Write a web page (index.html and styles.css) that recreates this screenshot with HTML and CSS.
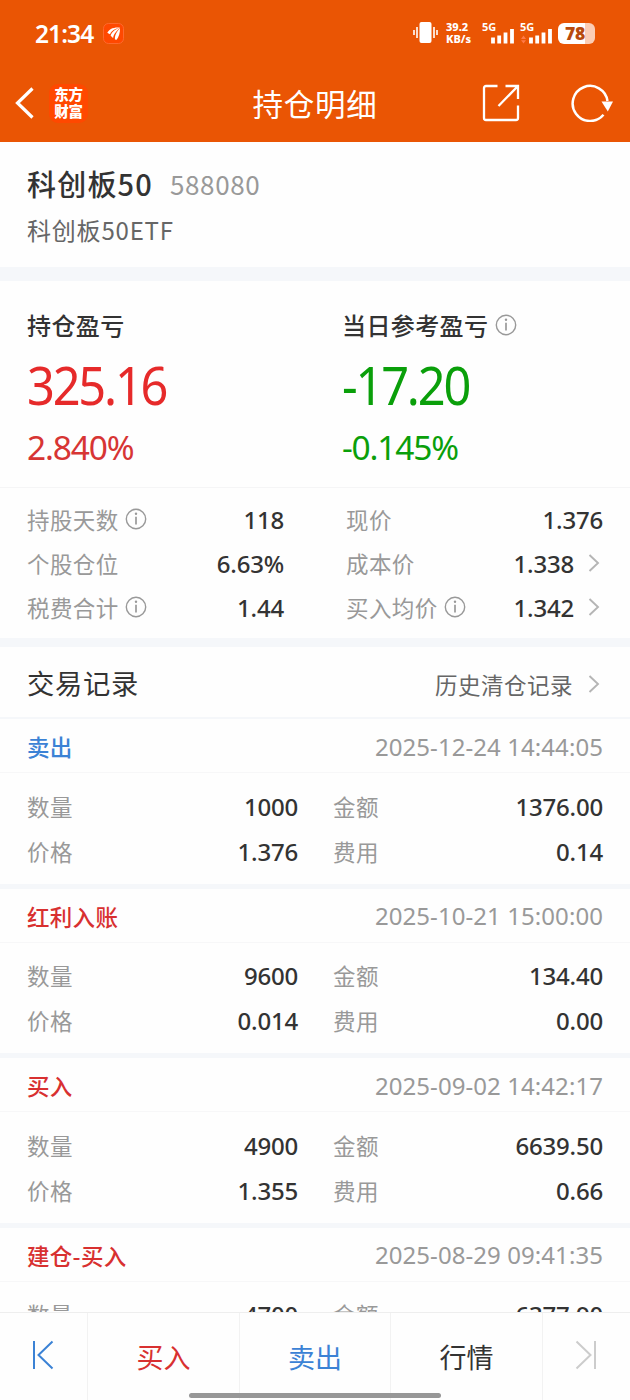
FILE: index.html
```html
<!DOCTYPE html>
<html lang="zh-CN">
<head>
<meta charset="utf-8">
<title>持仓明细</title>
<link rel="stylesheet" href="styles.css">
</head>
<body>
<svg class="defs" width="0" height="0" aria-hidden="true">
  <symbol id="info" viewBox="0 0 22 22"><circle cx="11" cy="11" r="9.7" fill="none" stroke="currentColor" stroke-width="1.4"/><path d="M11 8.800V16.6" stroke="currentColor" stroke-width="1.7"/><circle cx="11" cy="5.800" r="1.2" fill="currentColor"/></symbol>
  <symbol id="chev" viewBox="0 0 12 18"><path d="M1.5 1L10 9L1.5 17" fill="none" stroke="currentColor" stroke-width="1.9"/></symbol>
</svg>
<div class="screen">
  <header class="top">
    <div class="status">
      <span class="clock">21:34</span>
      <svg class="appmark" width="21" height="21" viewBox="0 0 21 21"><rect x=".5" y=".5" width="20" height="20" rx="5" fill="#ff4800" stroke="#ff7038" stroke-width=".8"/><path d="M4.300 9.800C7 5 11 4.500 17 4.200L12.500 6.100C9.500 7.300 8 9 7 11.200C6 10.900 5 10.400 4.300 9.800ZM7.600 12.600C9 9 11.500 6.900 17 4.600L13.300 8.500C11.200 10.800 10.500 12.500 10.100 15C9.300 14.500 8.200 13.500 7.600 12.600ZM12 16.500C11.500 13 13 9.500 17 4.900C17.200 10 15.700 14 13.600 16.700Z" fill="#fff"/></svg>
      <span class="grow"></span>
      <svg class="vibrate" width="26" height="22" viewBox="0 0 26 22"><rect x="6.500" y="0" width="12" height="21" rx="2" fill="#fff"/><path d="M1 8v5M4 5v11M21 5v11M24 8v5" stroke="#fff" stroke-width="1.600"/></svg>
      <span class="rate"><span>39.2</span><span>KB/s</span></span>
      <span class="signal"><b>5G</b><svg width="33" height="22" viewBox="0 0 33 22"><path d="M11 15.500v6M17.200 13.500v8M23.500 10.500v11M30 7v14.500" stroke="#fff" stroke-width="3.800"/></svg></span>
      <span class="signal"><b>5G</b><svg width="33" height="22" viewBox="0 0 33 22"><path d="M1 17L3.500 13.500L6 17ZM1 18.200L3.500 21.500L6 18.200Z" fill="#ff7a48"/><path d="M11 15.500v6M17.200 13.500v8M23.500 10.500v11M30 7v14.500" stroke="#fff" stroke-width="3.800"/></svg></span>
      <span class="battery"><b>78</b></span>
    </div>
    <nav class="nav">
      <div class="side">
        <svg width="20" height="32" viewBox="0 0 20 32"><path d="M18.500 1.500L3.500 16L18.500 30.500" fill="none" stroke="#fff" stroke-width="3.200"/></svg>
        <span class="brand"><span>东方</span><span>财富</span></span>
      </div>
      <h1>持仓明细</h1>
      <div class="side end">
        <svg width="38" height="38" viewBox="0 0 38 38" fill="none" stroke="#fff" stroke-width="2.300"><path d="M15.500 2H4a2 2 0 0 0-2 2V34a2 2 0 0 0 2 2H34a2 2 0 0 0 2-2V21.500M23.500 2H36V15M36 2L16.500 22"/></svg>
        <svg width="42" height="38" viewBox="0 0 42 38"><path d="M32.500 30.800A17.500 17.500 0 1 1 36.500 17" fill="none" stroke="#fff" stroke-width="2.500"/><path d="M30.500 17.500H42L36.800 27.500Z" fill="#fff"/></svg>
      </div>
    </nav>
  </header>
  <main class="content">
    <section class="fund">
      <div class="fund-title"><strong>科创板50</strong><span>588080</span></div>
      <p>科创板50ETF</p>
    </section>
    <section class="profit">
      <div class="up"><h2>持仓盈亏</h2><div class="big">325.16</div><div class="pct">2.840%</div></div>
      <div class="down"><h2>当日参考盈亏<svg class="info"><use href="#info"/></svg></h2><div class="big">-17.20</div><div class="pct">-0.145%</div></div>
    </section>
    <section class="stats">
      <div class="cell">持股天数<svg class="info"><use href="#info"/></svg><b>118</b></div>
      <div class="cell">现价<b>1.376</b></div>
      <div class="cell">个股仓位<b>6.63%</b></div>
      <div class="cell">成本价<b>1.338</b><svg class="chev"><use href="#chev"/></svg></div>
      <div class="cell">税费合计<svg class="info"><use href="#info"/></svg><b>1.44</b></div>
      <div class="cell">买入均价<svg class="info"><use href="#info"/></svg><b>1.342</b><svg class="chev"><use href="#chev"/></svg></div>
    </section>
    <div class="records-head"><h3>交易记录</h3><span>历史清仓记录</span><svg class="chev"><use href="#chev"/></svg></div>
    <article class="record">
      <div class="record-head sell"><b>卖出</b><time>2025-12-24 14:44:05</time></div>
      <div class="record-body"><div class="cell">数量<b>1000</b></div><div class="cell">金额<b>1376.00</b></div><div class="cell">价格<b>1.376</b></div><div class="cell">费用<b>0.14</b></div></div>
    </article>
    <article class="record">
      <div class="record-head buy"><b>红利入账</b><time>2025-10-21 15:00:00</time></div>
      <div class="record-body"><div class="cell">数量<b>9600</b></div><div class="cell">金额<b>134.40</b></div><div class="cell">价格<b>0.014</b></div><div class="cell">费用<b>0.00</b></div></div>
    </article>
    <article class="record">
      <div class="record-head buy"><b>买入</b><time>2025-09-02 14:42:17</time></div>
      <div class="record-body"><div class="cell">数量<b>4900</b></div><div class="cell">金额<b>6639.50</b></div><div class="cell">价格<b>1.355</b></div><div class="cell">费用<b>0.66</b></div></div>
    </article>
    <article class="record">
      <div class="record-head buy"><b>建仓-买入</b><time>2025-08-29 09:41:35</time></div>
      <div class="record-body"><div class="cell">数量<b>4700</b></div><div class="cell">金额<b>6377.90</b></div></div>
    </article>
  </main>
  <footer class="tabs">
    <span class="blue"><svg width="22" height="30" viewBox="0 0 22 30"><path d="M2 1v28M20.500 1.500L6.500 15L20.500 28.500" fill="none" stroke="currentColor" stroke-width="2"/></svg></span>
    <span class="red">买入</span>
    <span class="blue">卖出</span>
    <span>行情</span>
    <span class="muted"><svg width="22" height="30" viewBox="0 0 22 30"><path d="M20 1v28M1.500 1.500L15.500 15L1.500 28.500" fill="none" stroke="currentColor" stroke-width="2"/></svg></span>
    <i class="home"></i>
  </footer>
</div>
</body>
</html>
```
FILE: styles.css
```css
* { box-sizing: border-box; }
body { margin: 0; background: #fefefe; color: #333; font-family: "Noto Sans CJK SC", sans-serif; }
h1, h2, h3, p { margin: 0; font-weight: 400; }
svg { flex: none; display: block; }
.defs { position: absolute; }
.screen { width: 630px; height: 1400px; display: flex; flex-direction: column; overflow: hidden; }
.grow { flex: 1; }

.top { flex: none; height: 142px; background: #ea5504; color: #fff; }
.status { height: 66px; display: flex; align-items: center; padding: 0 35px; font-family: "Noto Sans", sans-serif; }
.clock { width: 68px; font-size: 24.500px; font-weight: 600; letter-spacing: -.9px; }
.vibrate { margin-right: 7px; }
.rate { width: 36px; font-size: 11px; line-height: 12px; font-weight: 800; display: flex; flex-direction: column; }
.signal { position: relative; width: 38px; height: 22px; }
.signal b { position: absolute; left: 0; top: -1px; font-size: 11px; line-height: 11px; font-weight: 700; }
.battery { width: 37px; height: 21px; border-radius: 6px; background: linear-gradient(90deg, #fff 27px, #fbcdb5 27px); display: flex; align-items: center; padding-left: 7px; color: #b74a0e; font-size: 17.500px; font-weight: 700; letter-spacing: -.3px; }
.nav { height: 74px; display: grid; grid-template-columns: 1fr auto 1fr; align-items: center; padding: 0 17px 0 14px; }
.nav h1 { font-size: 30.500px; letter-spacing: .7px; line-height: 48px; padding-left: 3px; margin-top: -1px; }
.side { display: flex; align-items: center; gap: 15px; }
.end { justify-content: flex-end; gap: 51px; }
.brand { width: 39px; height: 39px; border-radius: 9px; background: #ff4800; font-size: 14.500px; line-height: 17px; font-weight: 900; display: flex; flex-direction: column; align-items: center; padding-top: 1px; letter-spacing: -.3px; }

.content { flex: 1; min-height: 0; overflow: hidden; }
.fund { height: 139px; padding: 20px 27px 0; border-bottom: 14px solid #f5f7fa; }
.fund-title { display: flex; align-items: center; height: 42px; gap: 17px; font-size: 29px; }
.fund-title strong { font-weight: 500; letter-spacing: 1.200px; }
.fund-title span { color: #999; font-size: 26px; letter-spacing: .6px; }
.fund p { height: 52px; line-height: 52px; font-size: 24px; letter-spacing: .8px; color: #666; }

.profit { height: 207px; padding: 23px 27px 0; display: grid; grid-template-columns: 315px 1fr; border-bottom: 1px solid #f5f5f6; }
.profit h2 { display: flex; align-items: center; height: 40px; font-size: 24px; letter-spacing: .4px; font-weight: 500; }
.big, .pct { font-family: "Noto Sans", sans-serif; transform-origin: left; }
.big { height: 77px; line-height: 82px; font-size: 53px; letter-spacing: -2.400px; font-weight: 450; transform: scaleX(.92); }
.pct { height: 50px; line-height: 53px; font-size: 33.500px; letter-spacing: -1.200px; }
.up div { color: #e62a2a; }
.up .pct { color: #d73534; }
.down div { color: #0a9f0a; }
.info { width: 22px; height: 22px; margin-left: 6px; color: #999; }
.profit .info { margin-top: 1px; margin-left: 7px; }

.stats { height: 159px; padding: 9px 27px 0; display: grid; grid-template: repeat(3, 44px) / 257px 257px; column-gap: 62px; border-bottom: 9px solid #f5f7fa; }
.cell { display: flex; align-items: center; color: #999; font-size: 22.500px; letter-spacing: .4px; }
.cell b { margin-left: auto; color: #333; font: 500 24px "Noto Sans", sans-serif; letter-spacing: -.2px; }
.chev { width: 12px; height: 18px; margin: 0 3px 0 14px; color: #b5b5b5; }

.records-head { height: 72px; padding: 0 27px; display: flex; align-items: center; border-bottom: 2px solid #f5f7fa; }
.records-head h3 { font-size: 27.300px; letter-spacing: .7px; margin-right: auto; }
.records-head span { color: #666; font-size: 22.500px; letter-spacing: .5px; padding-top: 4px; }
.records-head .chev { margin-top: 4px; margin-left: 15px; }

.record { height: 169.500px; border-bottom: 5.500px solid #f5f7fa; }
.record-head { height: 54px; padding: 0 27px; display: flex; align-items: center; justify-content: space-between; border-bottom: 1px solid #f7f7f8; }
.record-head b { font-size: 22.500px; font-weight: 500; letter-spacing: .3px; padding-top: 1px; }
.record-head time { color: #999; font: 400 24px "Noto Sans", sans-serif; letter-spacing: .07px; padding-top: 1px; }
.record-body { padding: 10px 27px 0; display: grid; grid-template: 45px 45px / 271px 270px; column-gap: 35px; }
.record-body .cell b { padding-top: 1px; }
.sell b, .blue { color: #3b82d5; }
.buy b, .red { color: #d83030; }

.tabs { position: relative; flex: none; height: 88px; display: grid; grid-template-columns: 88px 152px 151px 152px 87px; border-top: 1px solid #eee; background: #fefefe; font-size: 27px; }
.tabs span { display: flex; align-items: center; justify-content: center; padding-bottom: 0; border-right: 1px solid #f2f2f2; }
.tabs span:last-of-type { border: 0; }
.tabs svg { margin: -3px 1px 0 0; }
.tabs .muted { color: #ccc; }
.home { position: absolute; left: 189px; top: 80px; width: 252px; height: 5px; border-radius: 3px; background: #979797; }
```
